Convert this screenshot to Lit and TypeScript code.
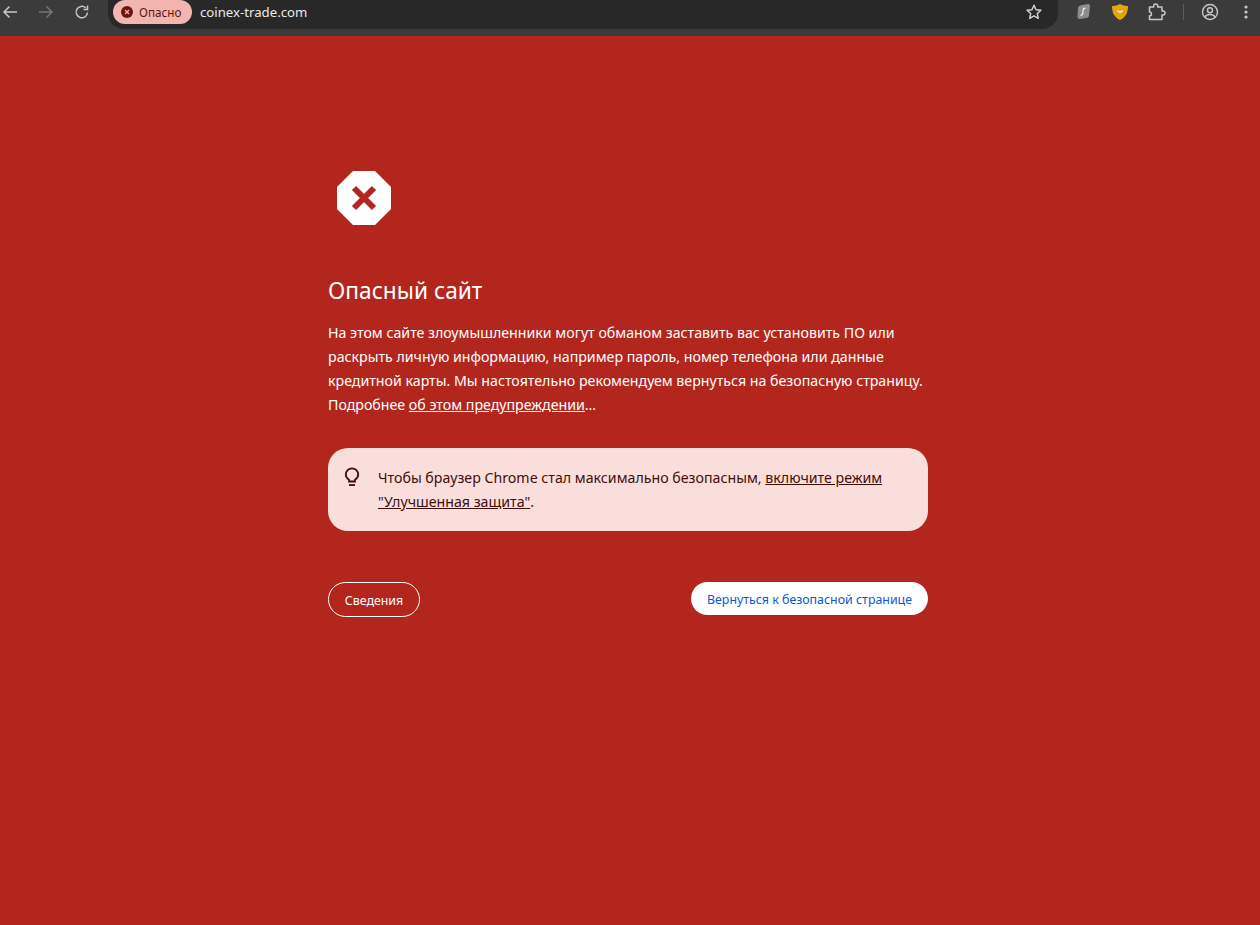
import { LitElement, html, css } from "lit";
import { customElement } from "lit/decorators.js";

@customElement("app-root")
export class AppRoot extends LitElement {
  static styles = css`
    :host { display: block; width: 1260px; height: 925px; background: #b3261e; overflow: hidden; font-family: "Noto Sans", "Open Sans", sans-serif; color: #fff; }
    .toolbar { height: 36px; background: #3b3b3b; display: flex; align-items: flex-start; box-sizing: border-box; }
    .nav { display: flex; align-items: center; height: 24px; flex: none; width: 108px; }
    .nav svg { display: block; flex: none; }
    .nav .b1 { margin-left: 1px; }
    .nav .b2 { margin-left: 18px; }
    .nav .b3 { margin-left: 18px; }
    .omni { width: 950px; height: 29px; background: #282828; border-radius: 0 0 16px 16px; display: flex; align-items: flex-start; box-sizing: border-box; padding-left: 5px; flex: none; }
    .chip { height: 24px; width: 79px; border-radius: 12px; background: #f3b5b0; color: #5c1410; font-size: 11.7px; display: flex; align-items: center; gap: 6px; padding-left: 8px; box-sizing: border-box; flex: none; }
    .url { color: #e8eaed; font-size: 13.2px; line-height: 25px; margin-left: 8px; }
    .star { margin-left: auto; margin-right: 15px; margin-top: 3px; display: block; }
    .ext { flex: 1; display: flex; align-items: center; height: 24px; }
    .ext svg { display: block; flex: none; }
    .ext .e1 { margin-left: 16px; }
    .ext .e2 { margin-left: 17px; }
    .ext .e3 { margin-left: 19px; }
    .sep { width: 1px; height: 16px; background: #5e5e5e; margin-left: 17px; flex: none; }
    .ext .e4 { margin-left: 17px; }
    .ext .e5 { margin-left: 25px; }

    main { width: 600px; margin: 0 0 0 328px; padding-top: 135px; }
    .stop { display: block; margin-left: 9px; }
    h1 { margin: 50px 0 0; font-size: 22.7px; font-weight: 400; line-height: 32px; }
    p.desc { margin: 14px 0 0; font-size: 14.2px; line-height: 24px; }
    a { color: inherit; text-decoration: underline; }
    .callout { margin-top: 31px; height: 83px; background: #f9dedc; color: #410e0b; border-radius: 20px; display: flex; box-sizing: border-box; padding: 18px 24px 0 14px; font-size: 14.2px; line-height: 24px; }
    .callout svg { flex: none; display: block; margin-right: 16px; margin-top: -1px; }
    .actions { display: flex; justify-content: space-between; align-items: flex-start; margin-top: 51px; }
    button { font: inherit; font-size: 12.4px; cursor: pointer; border-radius: 18px; box-sizing: border-box; padding: 1px 0 0; }
    .details { width: 92px; height: 35px; background: transparent; color: #fff; border: 1px solid #fff; }
    .back { width: 237px; height: 33px; background: #fff; color: #0b57d0; border: 0; }
  `;

  render() {
    return html`
      <div class="toolbar">
        <div class="nav">
          <svg class="b1" width="18" height="18" viewBox="0 0 18 18" fill="none" stroke="#c7c7c7" stroke-width="1.5"><path d="M16 9H3M8.500 3.500 3 9l5.500 5.500"/></svg>
          <svg class="b2" width="18" height="18" viewBox="0 0 18 18" fill="none" stroke="#757575" stroke-width="1.5"><path d="M2 9h13M9.500 3.500 15 9l-5.500 5.500"/></svg>
          <svg class="b3" width="18" height="18" viewBox="0 0 18 18" fill="none" stroke="#c7c7c7" stroke-width="1.500"><path d="M14.500 9.500A5.700 5.700 0 1 1 12.800 5"/><path d="M14.500 2.500v4h-4"/></svg>
        </div>
        <div class="omni">
          <div class="chip">
            <svg width="12" height="12" viewBox="0 0 12 12"><circle cx="6" cy="6" r="6" fill="#6b1510"/><path d="M4 4l4 4M8 4l-4 4" stroke="#f3b5b0" stroke-width="1.300"/></svg>
            <span>Опасно</span>
          </div>
          <span class="url">coinex-trade.com</span>
          <svg class="star" width="18" height="18" viewBox="0 0 18 18" fill="none" stroke="#d5d5d5" stroke-width="1.400" stroke-linejoin="round"><path d="M9 2.200l2.050 4.500 4.900.550-3.650 3.300 1 4.850L9 12.950 4.700 15.400l1-4.850-3.650-3.300 4.900-.550z"/></svg>
        </div>
        <div class="ext">
          <svg class="e1" width="20" height="18" viewBox="0 0 20 18"><path d="M6 2.500 14 1q2-.3 2 1.700l-1 10q-.2 1.500-1.700 2L6 16q-2.500.5-2.500-2L4 5q.2-2 2-2.500z" fill="#8d8d8d"/><path d="M11.500 5.500c-2-.8-2.300.6-2.500 3-.2 2.800-.5 4-2.500 3.500" fill="none" stroke="#f0f0f0" stroke-width="1.300"/></svg>
          <svg class="e2" width="18" height="18" viewBox="0 0 18 18"><path d="M9 1c3 1.500 5.500 2 8 2 0 6-2 11.500-8 14C3 14.500 1 9 1 3c2.500 0 5-.5 8-2z" fill="#e5a50a"/><path d="M6.500 7.500 9 9.500l2.500-2" fill="none" stroke="#fff" stroke-width="1.300"/></svg>
          <svg class="e3" width="18" height="18" viewBox="0 0 18 18" fill="none" stroke="#c7c7c7" stroke-width="1.500" stroke-linejoin="round"><path d="M1.500 4h4.200V3a2 2 0 0 1 4 0v1h4.300v4h1a2 2 0 0 1 0 4h-1v4.500H1.500v-3.700c2.600 0 2.600-3.800 0-3.800z"/></svg>
          <div class="sep"></div>
          <svg class="e4" width="18" height="18" viewBox="0 0 18 18" fill="none" stroke="#c7c7c7" stroke-width="1.400"><circle cx="9" cy="9" r="7.500"/><circle cx="9" cy="7.200" r="2.500"/><path d="M3.800 14c1.200-1.800 3-2.500 5.200-2.500s4 .7 5.200 2.500"/></svg>
          <svg class="e5" width="4" height="14" viewBox="0 0 4 14" fill="#c7c7c7"><circle cx="2" cy="2" r="1.600"/><circle cx="2" cy="7" r="1.600"/><circle cx="2" cy="12" r="1.600"/></svg>
        </div>
      </div>
      <main>
        <svg class="stop" width="54" height="54" viewBox="0 0 54 54"><path d="M16 0h22l16 16v22L38 54H16L0 38V16z" fill="#fff"/><path d="M17 17l20 20M37 17 17 37" stroke="#b3261e" stroke-width="6" fill="none"/></svg>
        <h1>Опасный сайт</h1>
        <p class="desc">На этом сайте злоумышленники могут обманом заставить вас установить ПО или<br>раскрыть личную информацию, например пароль, номер телефона или данные<br>кредитной карты. Мы настоятельно рекомендуем вернуться на безопасную страницу.<br>Подробнее <a href="#">об этом предупреждении</a>…</p>
        <div class="callout">
          <svg width="20" height="24" viewBox="0 0 20 24" fill="none" stroke="#410e0b" stroke-width="1.800"><path d="M7 16.500v-1.800C4.800 13.300 3.800 11.500 3.800 9.500a6.200 6.200 0 0 1 12.400 0c0 2-1 3.800-3.200 5.200v1.800z"/><path d="M7 20h6"/></svg>
          <div>Чтобы браузер Chrome стал максимально безопасным, <a href="#">включите режим<br>"Улучшенная защита"</a>.</div>
        </div>
        <div class="actions">
          <button class="details">Сведения</button>
          <button class="back">Вернуться к безопасной странице</button>
        </div>
      </main>
    `;
  }
}
